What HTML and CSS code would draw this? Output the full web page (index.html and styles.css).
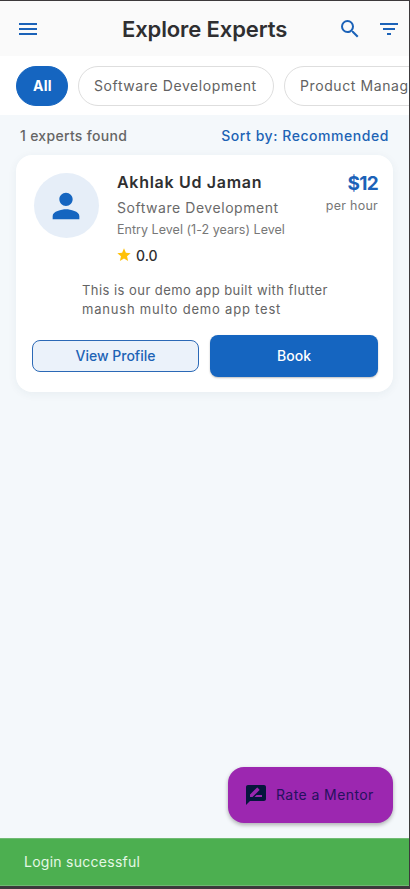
FILE: index.html
```html
<!DOCTYPE html>
<html lang="en">
<head>
<meta charset="utf-8">
<meta name="viewport" content="width=device-width, initial-scale=1">
<title>Explore Experts</title>
<link rel="stylesheet" href="styles.css">
</head>
<body>
<div class="screen">
  <header class="appbar">
    <svg class="icon" viewBox="0 0 24 24"><path d="M3 18h18v-2H3v2zm0-5h18v-2H3v2zm0-7v2h18V6H3z"/></svg>
    <h1 class="title">Explore Experts</h1>
    <svg class="icon search" viewBox="0 0 24 24"><path d="M15.5 14h-.79l-.28-.27A6.47 6.47 0 0 0 16 9.5 6.5 6.5 0 1 0 9.5 16c1.61 0 3.09-.59 4.23-1.57l.27.28v.79l5 4.99L20.49 19l-4.99-5zm-6 0C7.01 14 5 11.99 5 9.5S7.01 5 9.5 5 14 7.01 14 9.5 11.99 14 9.5 14z"/></svg>
    <svg class="icon filter" viewBox="0 0 24 24"><path d="M10 18h4v-2h-4v2zM3 6v2h18V6H3zm3 7h12v-2H6v2z"/></svg>
  </header>
  <nav class="chips">
    <span class="chip chip-all"><b class="t-all">All</b></span>
    <span class="chip chip-sw"><span class="t-sw">Software Development</span></span>
    <span class="chip chip-pm"><span class="t-pm">Product Management</span></span>
  </nav>
  <main class="content">
    <div class="summary">
      <span class="t-count">1 experts found</span>
      <span class="t-sort">Sort by: Recommended</span>
    </div>
    <article class="card">
      <div class="profile">
        <div class="avatar"><svg viewBox="0 0 24 24"><path d="M12 12c2.21 0 4-1.79 4-4s-1.79-4-4-4-4 1.79-4 4 1.79 4 4 4zm0 2c-2.67 0-8 1.34-8 4v2h16v-2c0-2.66-5.33-4-8-4z"/></svg></div>
        <div class="info">
          <div class="t-name">Akhlak Ud Jaman</div>
          <div class="t-field">Software Development</div>
          <div class="t-level">Entry Level (1-2 years) Level</div>
          <div class="rating"><svg viewBox="0 0 24 24"><path d="M12 17.27L18.18 21l-1.64-7.03L22 9.24l-7.19-.61L12 2 9.19 8.63 2 9.24l5.46 4.73L5.82 21z"/></svg><span>0.0</span></div>
        </div>
        <div class="price"><div class="t-amount">$12</div><div class="t-per">per hour</div></div>
      </div>
      <p class="bio"><span class="bio-a">This is our demo app built with flutter</span><br><span class="bio-b">manush multo demo app test</span></p>
      <div class="actions">
        <button class="view"><span class="t-view">View Profile</span></button>
        <button class="book"><span class="t-book">Book</span></button>
      </div>
    </article>
  </main>
  <button class="fab">
    <svg viewBox="0 0 24 24"><path fill-rule="evenodd" d="M20 2H4c-1.1 0-1.99.9-1.99 2L2 22l4-4h14c1.1 0 2-.9 2-2V4c0-1.1-.9-2-2-2zM6 14v-2.47l6.88-6.88c.2-.2.51-.2.71 0l1.77 1.77c.2.2.2.51 0 .71L8.47 14H6zm12 0h-7.5l2-2H18v2z"/></svg>
    <span class="t-fab">Rate a Mentor</span>
  </button>
  <div class="snackbar"><span class="t-snack">Login successful</span></div>
</div>
</body>
</html>
```

FILE: styles.css
```css
* { box-sizing: border-box; }
html, body { margin: 0; height: 100%; }
body { font-family: Inter, sans-serif; color: #2f2f31; background: #3c393b; overflow: hidden; white-space: nowrap; }
button { font: inherit; border: 0; padding: 0; }
svg { display: block; flex: none; }

.screen { width: 410px; height: 889px; display: flex; flex-direction: column; background: #f4f8fb; border: solid #3c393b; border-width: 1px 1px 3px 0; overflow: hidden; }
.appbar { flex: none; height: 55px; display: flex; align-items: center; padding-left: 16px; background: #fafafa; }
.icon { width: 24px; height: 24px; fill: #1b62b8; }
.title { margin: 0; width: 165px; margin-left: 82px; font-size: 22px; line-height: 30px; font-weight: 600; letter-spacing: -.12px; }
.search { margin-left: 51px; }
.filter { margin-left: 15px; }

.chips { flex: none; height: 59px; display: flex; align-items: center; gap: 10px; padding-left: 16px; background: #fff; }
.chip { flex: none; height: 40px; display: flex; align-items: center; padding-left: 15px; border: 1px solid #dedede; border-radius: 20px; background: #fff; color: #626262; font-size: 14px; }
.chip-all { width: 52px; padding-left: 16px; background: #1565c0; border-color: #1565c0; color: #fff; }
.chip-sw { width: 196px; }
.chip-pm { width: 190px; }
.t-sw, .t-pm { letter-spacing: .6px; }
.t-all { letter-spacing: .3px; }

.content { flex: 1; min-height: 0; padding: 0 16px; }
.summary { height: 40px; display: flex; justify-content: space-between; align-items: center; padding: 0 4px 0 4px; font-size: 14px; font-weight: 500; }
.t-count { color: #656565; letter-spacing: .3px; }
.t-sort { color: #1d63b5; letter-spacing: .55px; }

.card { height: 237px; padding: 18px 15px 0 16px; background: #fff; border-radius: 16px; box-shadow: 0 2px 10px rgba(30,60,90,.06); }
.profile { height: 101px; display: flex; }
.avatar { width: 65px; height: 65px; margin-left: 2px; padding-right: 1px; border-radius: 50%; display: flex; align-items: center; justify-content: center; background: #e6eef8; }
.avatar svg { width: 40px; height: 40px; fill: #1565c0; }
.info { flex: 1; margin: -1px 0 0 18px; }
.t-name { font-size: 16px; line-height: 20px; font-weight: 600; letter-spacing: .7px; }
.t-field { margin-top: 5px; font-size: 14px; line-height: 21px; color: #6a6a6a; letter-spacing: .55px; }
.t-level { margin-top: 3px; font-size: 12.5px; line-height: 18px; color: #777; letter-spacing: .03px; }
.rating { display: flex; align-items: center; height: 20px; margin-top: 6px; margin-left: -1px; font-size: 14px; font-weight: 500; }
.rating svg { width: 16px; height: 16px; fill: #ffc107; margin-right: 4px; }
.price { text-align: right; margin-top: -1px; }
.t-amount { font-size: 19px; line-height: 23px; font-weight: 700; color: #1b62b8; letter-spacing: -.7px; }
.t-per { margin-top: 3px; font-size: 12.5px; line-height: 16px; color: #777; letter-spacing: .25px; }
.bio { margin: 7px 0 0 50px; font-size: 13px; line-height: 19px; color: #646464; letter-spacing: .45px; }
.bio-b { letter-spacing: .8px; }
.actions { display: flex; align-items: center; gap: 11px; height: 42px; margin-top: 16px; }
.view, .book { flex: 1; border-radius: 8px; padding-bottom: 2px; font-size: 14px; font-weight: 500; }
.view { flex: 0 0 167px; height: 32px; border: 1px solid #2b69b6; background: #ebf2fa; color: #1d63b5; }
.book { height: 42px; background: #1565c0; color: #fff; box-shadow: 0 1px 2px rgba(0,0,0,.25); }

.fab { flex: none; align-self: flex-end; width: 165px; height: 56px; margin: 0 16px 15px 0; display: flex; align-items: center; padding-left: 16px; border-radius: 16px; background: #9c27b0; color: #25115e; font-size: 14px; box-shadow: 0 2px 4px rgba(0,0,0,.3); }
.fab svg { width: 24px; height: 24px; fill: #06163c; margin-right: 8px; }
.t-fab { letter-spacing: .42px; padding-bottom: 1px; }
.snackbar { flex: none; height: 48px; display: flex; align-items: center; padding: 0 0 2px 24px; background: #4caf50; border: solid #70ba73; border-width: 1px 0; color: #e4f8e5; font-size: 14px; }
.t-snack { letter-spacing: .27px; }
```
